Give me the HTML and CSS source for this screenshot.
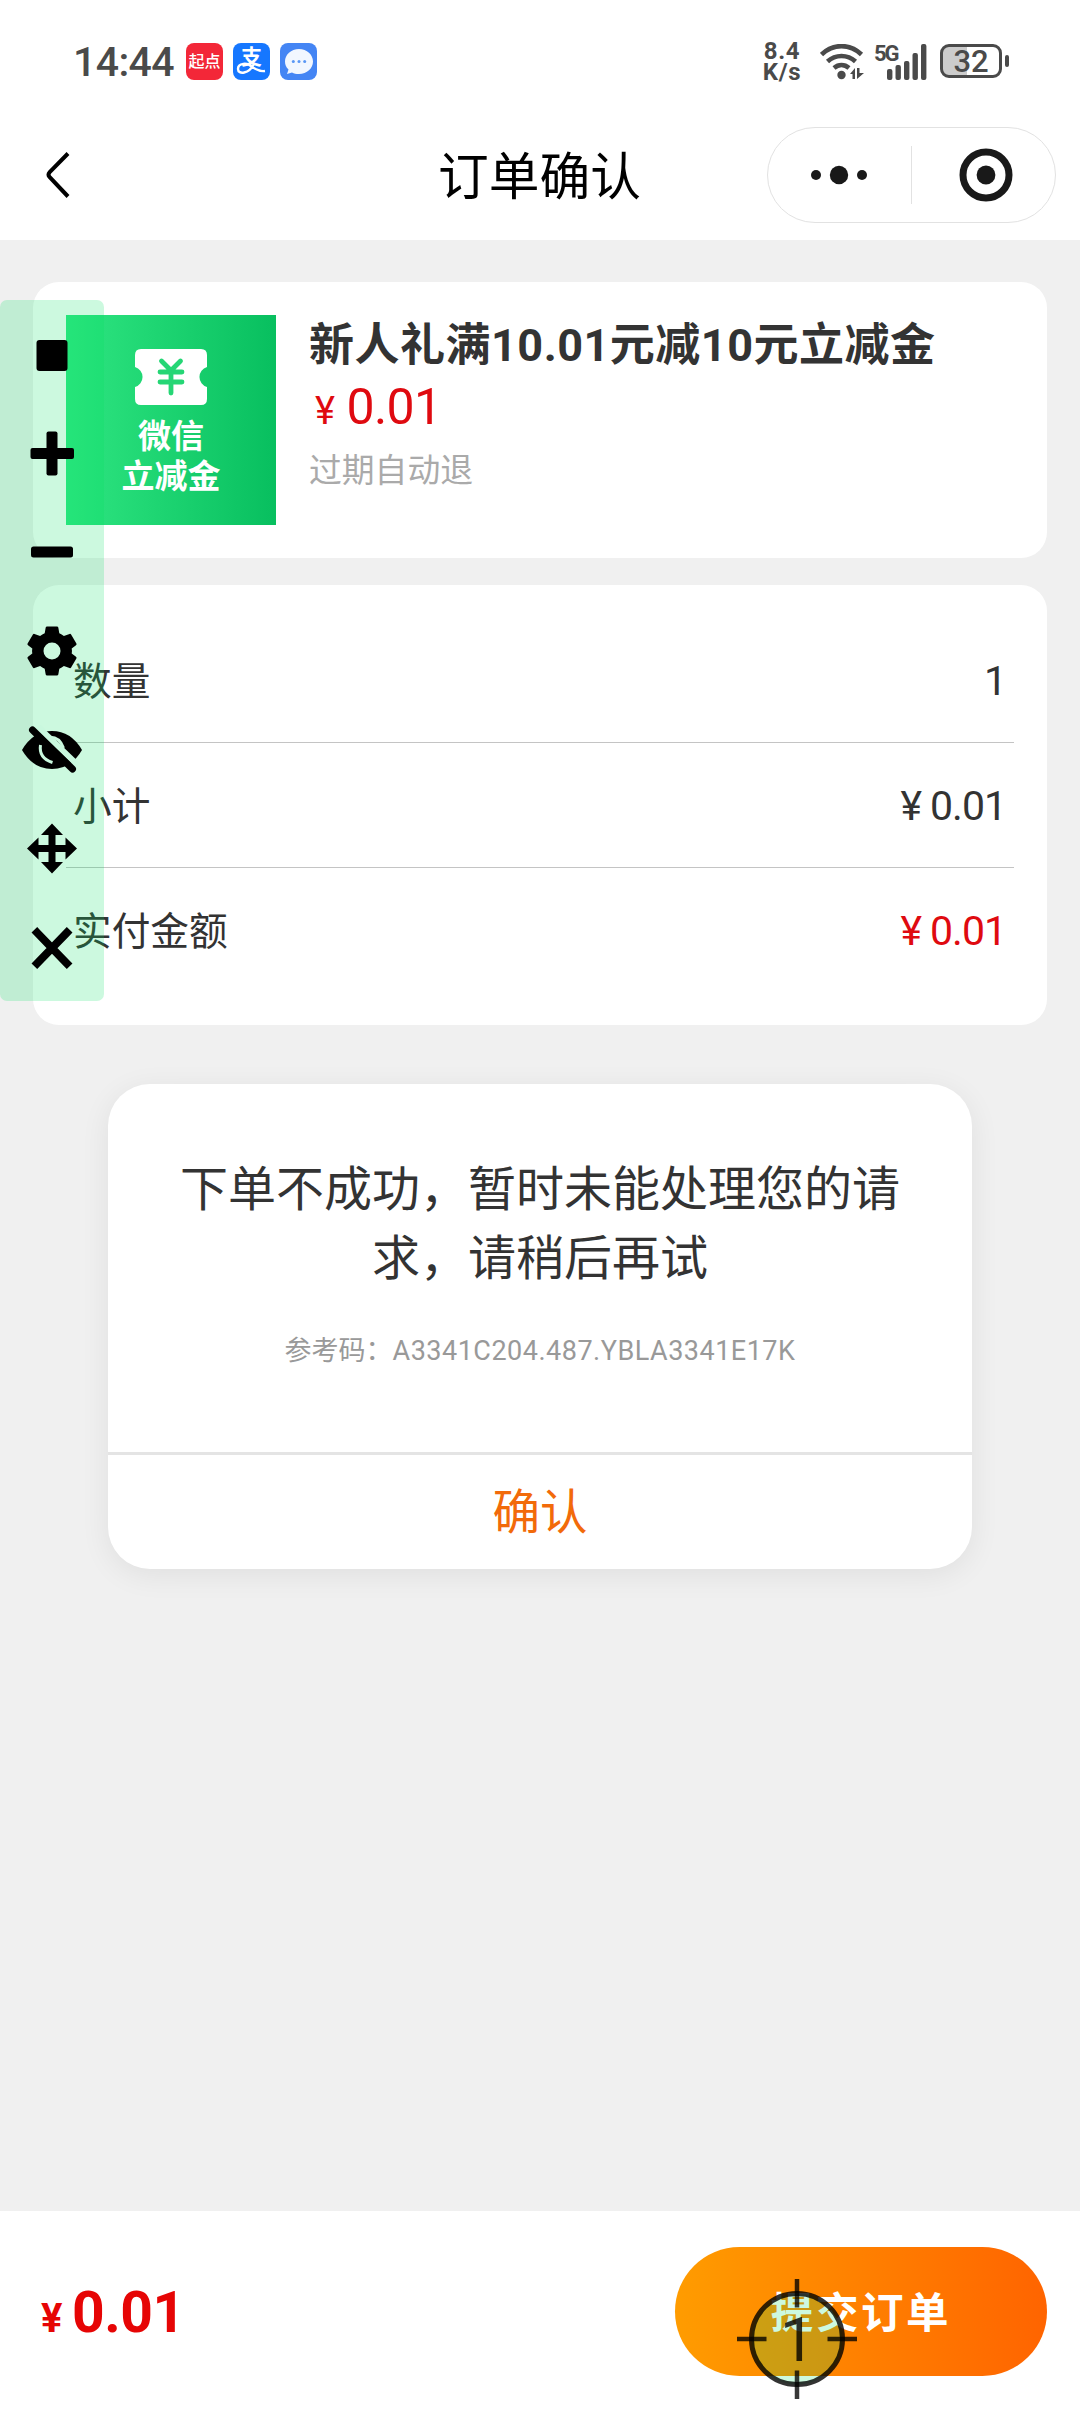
FILE: index.html
```html
<!DOCTYPE html>
<html lang="zh-CN">
<head>
<meta charset="UTF-8">
<title>订单确认</title>
<link rel="stylesheet" href="styles.css">
</head>
<body>
<div class="screen">
  <header class="top">
    <div class="status">
      <span class="clock">14:44</span>
      <div class="apps">
        <span class="app app-qd">起点</span>
        <span class="app app-pay">支<svg class="app-art" viewBox="0 0 37 37"><path d="M20 24C14 19 5 20 5 26c0 6 11 5 16-5M15 21c5 4 11 8 17 7" fill="none" stroke="#fff" stroke-width="2.4"/></svg></span>
        <span class="app app-msg"><svg viewBox="0 0 37 37"><path d="M19 6c8 0 14 5.700 14 12.600S27 31 19 31c-3 0-5-.500-7-1.500L7 31l1.500-4.500C6 24.500 5 21.500 5 18.600 5 11.700 11 6 19 6z" fill="#f2f7ff"/><circle cx="13.300" cy="18.500" r="1.500" fill="#5a97f5"/><circle cx="19" cy="18.500" r="1.500" fill="#5a97f5"/><circle cx="24.700" cy="18.500" r="1.500" fill="#5a97f5"/></svg></span>
      </div>
      <div class="speed"><span>8.4</span><span>K/s</span></div>
      <svg class="wifi" viewBox="0 0 44 36"><g fill="none" stroke="#4a4a4a" stroke-width="4.600"><path d="M1.500 10.500C13-.700 30-.700 41.500 10.500"/><path d="M7.500 17.500c8-7.400 20-7.400 28 0"/><path d="M14 24c4.500-3.800 10.500-3.800 15 0"/></g><circle cx="21.500" cy="31" r="4.200" fill="#4a4a4a"/><path d="M30 30l5-6v11h-2.500v-5zM37 24v11l7-6h-4.500v-5z" fill="#4a4a4a"/></svg>
      <div class="signal"><span class="gen">5G</span><svg viewBox="0 0 40 36"><g fill="#4a4a4a"><rect x="0" y="25" width="5.400" height="11" rx="2"/><rect x="8.500" y="21" width="5.400" height="15" rx="2"/><rect x="17" y="17" width="5.400" height="19" rx="2"/><rect x="25.500" y="9" width="5.400" height="27" rx="2"/><rect x="34" y="0" width="5.400" height="36" rx="2"/></g></svg></div>
      <div class="battery"><span class="cell">32</span><span class="nub"></span></div>
    </div>
    <div class="nav">
      <svg class="back" viewBox="0 0 26 50"><path d="M23 3.500L4.700 22.200q-2.300 2.500 0 5L23 46.500" fill="none" stroke="#000" stroke-width="4"/></svg>
      <h1>订单确认</h1>
      <div class="capsule">
        <svg class="more" viewBox="0 0 58 20"><circle cx="6" cy="10" r="5"/><circle cx="29" cy="10" r="9.200"/><circle cx="52" cy="10" r="5"/></svg>
        <span class="split"></span>
        <svg class="ring" viewBox="0 0 54 54"><circle cx="27" cy="27" r="23" fill="none" stroke="#191919" stroke-width="7"/><circle cx="27" cy="27" r="9.400"/></svg>
      </div>
    </div>
  </header>

  <main>
    <section class="card product">
      <div class="thumb">
        <svg viewBox="0 0 72 56"><path d="M6 0h60q6 0 6 6v12a10.400 10.400 0 0 0 0 20v12q0 6-6 6H6q-6 0-6-6V38a10.400 10.400 0 0 0 0-20V6q0-6 6-6z" fill="#fff"/><path d="M26.500 12L36 21.500 45.500 12M25 23h22M25 33h22M36 22v22" fill="none" stroke="#25d675" stroke-width="4.800" stroke-linecap="round"/></svg>
        <span>微信</span><span>立减金</span>
      </div>
      <div class="info">
        <h2>新人礼满10.01元减10元立减金</h2>
        <p class="price"><span class="yen">¥</span>0.01</p>
        <p class="hint">过期自动退</p>
      </div>
    </section>

    <section class="card bill">
      <div class="row"><span class="label">数量</span><span class="val">1</span></div>
      <div class="row"><span class="label">小计</span><span class="val"><span class="yen">¥</span>0.01</span></div>
      <div class="row"><span class="label">实付金额</span><span class="val red"><span class="yen">¥</span>0.01</span></div>
    </section>

    <section class="dialog">
      <p class="msg">下单不成功，暂时未能处理您的请求，请稍后再试</p>
      <p class="code">参考码：<span>A3341C204.487.YBLA3341E17K</span></p>
      <button class="ok">确认</button>
    </section>
  </main>

  <footer class="bar">
    <p class="total"><span class="yen">¥</span>0.01</p>
    <button class="submit">提交订单</button>
  </footer>

  <aside class="tools">
    <svg viewBox="0 0 64 64"><rect x="16.500" y="17" width="31" height="31" rx="3"/></svg>
    <svg viewBox="0 0 64 64"><rect x="26.500" y="9.500" width="11" height="44" rx="2"/><rect x="10.500" y="26" width="43.500" height="11" rx="2"/></svg>
    <svg viewBox="0 0 64 64"><rect x="11" y="25.500" width="42" height="11" rx="2.500"/></svg>
    <svg viewBox="0 0 64 64"><path transform="translate(0 -1)" fill-rule="evenodd" d="M25.700 8.500q.3-1 1.300-1h10q1 0 1.300 1l1 5.800q2.400 1 4.600 2.600l5.600-2q1-.4 1.600.5l5.300 9.200q.5 1-.4 1.700l-4.300 3.300q.5 2.400 0 4.800l4.300 3.300q.9.700.4 1.700l-5.300 9.200q-.6.9-1.600.5l-5.600-2q-2.200 1.600-4.600 2.600l-1 5.800q-.3 1-1.300 1H27q-1 0-1.300-1l-1-5.800q-2.400-1-4.600-2.600l-5.600 2q-1 .4-1.600-.5l-5.300-9.200q-.5-1 .4-1.700l4.300-3.300q-.5-2.400 0-4.800L8 26.300q-.9-.7-.4-1.700l5.300-9.200q.6-.9 1.600-.5l5.600 2q2.200-1.600 4.600-2.600zM32 23.500a8.500 8.500 0 1 0 0 17 8.500 8.500 0 0 0 0-17z"/></svg>
    <svg viewBox="0 0 64 64"><g transform="translate(0 -1)"><path d="M2 32Q13 13 32 13t30 19Q51 51 32 51T2 32z"/><path d="M28 19.500q11-1.500 15.500 10.500M20.500 27q-2 13 12 17.500" fill="none" stroke="#c9f8de" stroke-width="3"/><path d="M18 9l40 38.500" stroke="#c9f8de" stroke-width="6"/><path d="M12.500 12l40 39" stroke="#000" stroke-width="7" stroke-linecap="round"/></g></svg>
    <svg viewBox="0 0 64 64"><path transform="translate(0 -1.500)" d="M32 7l11 11.500h-7.500v10h10V21L57 32 45.500 43v-7.500h-10v10H43L32 57 21 45.500h7.500v-10h-10V43L7 32l11.500-11v7.500h10v-10H21z"/></svg>
    <svg viewBox="0 0 64 64"><path d="M16 15l32 33M48 15L16 48" stroke="#000" stroke-width="8.500" stroke-linecap="square" transform="translate(32 31.500) scale(.93) translate(-32 -32)"/></svg>
  </aside>

  <div class="marker">
    <svg viewBox="0 0 120 120"><circle cx="60" cy="60" r="45.500" fill="rgba(0,225,95,.2)" stroke="#000" stroke-opacity=".8" stroke-width="5"/><path d="M60 0v28.500M60 91.500V120M0 60h29.500M90.500 60H120" stroke="#000" stroke-opacity=".78" stroke-width="4.500"/></svg>
    <span>1</span>
  </div>
</div>
</body>
</html>
```
FILE: styles.css
```css
* { box-sizing: border-box; margin: 0; padding: 0; }
body {
  font-family: Roboto, "Noto Sans CJK SC", sans-serif;
  color: #333;
  background: #f0f0f0;
}
svg { display: block; }
button { border: 0; background: none; font: inherit; }
h1, h2 { font-weight: 400; }

.screen {
  position: relative;
  width: 1080px;
  height: 2412px;
  display: flex;
  flex-direction: column;
  overflow: hidden;
}

/* status bar and navigation */
.top { height: 240px; background: #fff; flex: none; }
.status {
  height: 111px;
  padding: 43px 71px 0 73px;
  display: flex;
  align-items: flex-start;
  color: #4a4a4a;
}
.clock { font-size: 41px; line-height: 39px; font-weight: 500; letter-spacing: -.6px; width: 113px; white-space: nowrap; }
.apps { display: flex; gap: 10px; margin-right: auto; }
.app {
  position: relative;
  width: 37px;
  height: 37px;
  border-radius: 8px;
  color: #fff;
  text-align: center;
  white-space: nowrap;
}
.app-qd { background: #f32738; font-size: 16px; line-height: 38px; font-weight: 500; }
.app-pay { background: #1677ff; font-size: 21px; font-weight: 700; line-height: 29px; }
.app-art { position: absolute; left: 0; top: 0; width: 37px; height: 37px; }
.app-msg { background: #4485f4; }
.speed {
  width: 44px;
  margin: -2px 16px 0 0;
  display: flex;
  flex-direction: column;
  align-items: center;
  font-size: 24px;
  line-height: 21px;
  font-weight: 700;
  letter-spacing: .6px;
}
.wifi { width: 44px; height: 36px; margin: 1px 10px 0 0; }
.signal { position: relative; width: 53px; height: 36px; padding-left: 13px; margin: 1px 13px 0 0; }
.signal svg { width: 40px; height: 36px; }
.gen { position: absolute; left: 0; top: -1px; font-size: 22px; line-height: 22px; font-weight: 700; letter-spacing: -2px; }
.battery { display: flex; align-items: center; gap: 3px; margin-top: 1px; }
.cell {
  width: 62px;
  height: 34px;
  border: 3px solid #4a4a4a;
  border-radius: 9px;
  background: linear-gradient(90deg, #ccc 24px, #fff 24px);
  font-size: 31px;
  line-height: 29px;
  font-weight: 500;
  text-align: center;
}
.nub { width: 4px; height: 12px; border-radius: 2px; background: #4a4a4a; }

.nav {
  height: 129px;
  padding: 16px 24px 0 45px;
  display: grid;
  grid-template-columns: 289px 1fr 289px;
  align-items: start;
}
.back { width: 26px; height: 50px; margin-top: 23px; }
.nav h1 {
  margin: 3px 22px 0 0;
  font-size: 50.700px;
  line-height: 96px;
  text-align: center;
  color: #000;
  white-space: nowrap;
}
.capsule {
  width: 289px;
  height: 96px;
  border: 1px solid #e2e2e2;
  border-radius: 48px;
  display: flex;
  align-items: center;
  fill: #191919;
}
.more { width: 58px; height: 20px; margin: 0 43px 0 42px; }
.split { width: 1px; height: 58px; background: #e2e2e2; }
.ring { width: 54px; height: 54px; margin-left: 47px; }

/* content cards */
main { flex: 1; padding: 42px 33px 0; }
.card { background: #fff; border-radius: 26px; }
.product { height: 276px; padding: 33px; display: flex; gap: 33px; }
.thumb {
  width: 210px;
  height: 210px;
  padding-top: 34px;
  background: linear-gradient(90deg, #2fe681, #08bf5f);
  color: #fff;
  display: flex;
  flex-direction: column;
  align-items: center;
  font-size: 33px;
  line-height: 40px;
  font-weight: 700;
}
.thumb svg { width: 72px; height: 56px; margin-bottom: 12px; }
.info h2 { padding-top: 2px; font-size: 45px; line-height: 58px; font-weight: 700; letter-spacing: .5px; white-space: nowrap; }
.price { font-size: 50px; line-height: 64px; color: #df0a10; padding-left: 6px; letter-spacing: -.6px; }
.price .yen { font-size: 38px; margin-right: 12px; }
.hint { font-size: 32.800px; line-height: 56px; margin-top: 0; color: #aaa; }

.bill { height: 440px; margin-top: 27px; padding: 33px 33px 0; }
.row {
  height: 125px;
  padding: 0 8px 0 7px;
  display: flex;
  justify-content: space-between;
  align-items: center;
  font-size: 38.700px;
  border-bottom: 1px solid #c4c4c4;
}
.row:last-child { border-bottom: 0; }
.label { padding-bottom: 5px; }
.val { font-size: 41px; letter-spacing: -1px; padding-top: 1px; }
.val .yen { margin-right: 9px; }
.red { color: #df0a10; }

/* failure dialog */
.dialog {
  width: 864px;
  height: 485px;
  margin: 59px auto 0;
  padding-top: 71px;
  background: #fff;
  border-radius: 42px;
  box-shadow: 0 6px 30px rgba(0, 0, 0, .07);
  display: flex;
  flex-direction: column;
  align-items: center;
  text-align: center;
}
.msg { width: 722px; font-size: 48px; line-height: 69px; }
.code { font-size: 27px; line-height: 40px; margin-top: 38px; color: #999; white-space: nowrap; }
.code span { letter-spacing: .5px; }
.ok {
  width: 100%;
  margin-top: auto;
  height: 117px;
  padding-bottom: 8px;
  border-top: 3px solid #e4e4e4;
  font-size: 47.500px;
  color: #f26a0a;
}

/* payment bar */
.bar {
  flex: none;
  height: 201px;
  padding: 36px 33px 0 41px;
  background: #fff;
  display: flex;
  justify-content: space-between;
}
.total { font-size: 57px; line-height: 132px; font-weight: 700; color: #e60505; white-space: nowrap; letter-spacing: -.5px; }
.total .yen { font-size: 40px; margin-right: 10px; }
.submit {
  width: 372px;
  height: 129px;
  padding-bottom: 5px;
  border-radius: 65px;
  background: linear-gradient(90deg, #ff9c00, #ff6400);
  color: #fff;
  font-size: 42.500px;
  font-weight: 700;
  letter-spacing: 2.600px;
}

/* floating tool strip and tap marker lie above the page */
.tools {
  position: absolute;
  left: 0;
  top: 300px;
  width: 104px;
  height: 701px;
  padding: 23px 0 0 20px;
  border-radius: 7px;
  background: rgba(0, 225, 95, .2);
  display: flex;
  flex-direction: column;
  gap: 35px;
}
.tools svg { width: 64px; height: 64px; }
.marker { position: absolute; left: 737px; top: 2279px; width: 120px; height: 120px; }
.marker svg { width: 120px; height: 120px; }
.marker span {
  position: absolute;
  left: 43px;
  top: 25px;
  font-size: 62px;
  line-height: 72px;
  color: rgba(0, 0, 0, .8);
}
```
